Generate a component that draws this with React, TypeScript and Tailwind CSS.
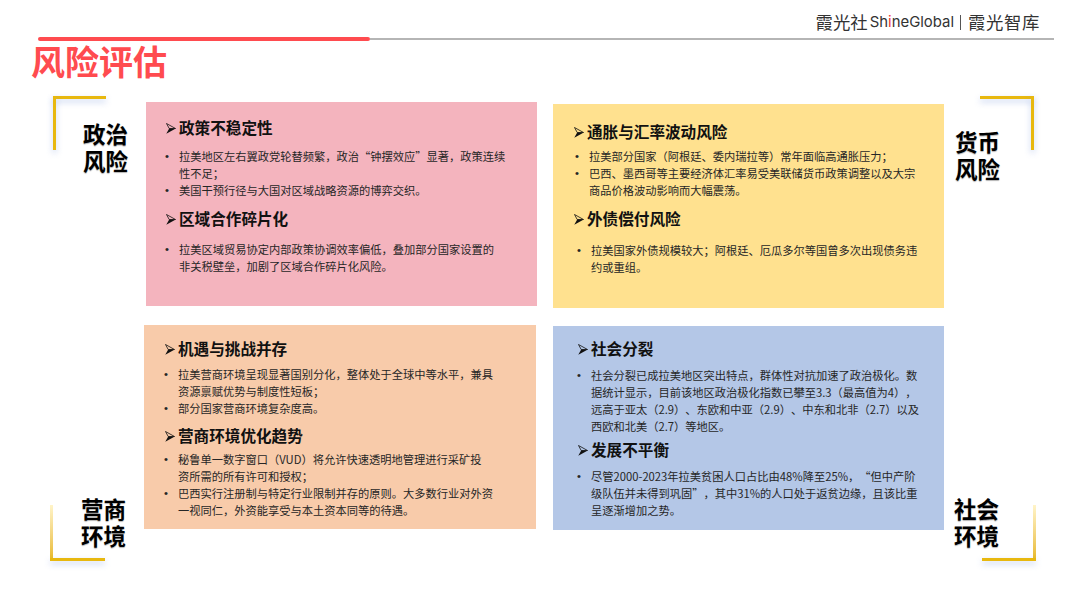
import { FC, ReactNode } from "react";

const font = "font-['Noto_Sans_CJK_SC','Noto_Sans',sans-serif]";

// body copy is typed with plain punctuation, shown full width like the slide
const fullWidth = (s: string) =>
  s
    .replace(/,/g, "\uFF0C")
    .replace(/;/g, "\uFF1B")
    .replace(/\(/g, "\uFF08")
    .replace(/\)/g, "\uFF09");

const Arrow = () => (
  <svg viewBox="0 0 10 11" className="w-[10px] h-[11px] ml-[1px] mr-[3px] shrink-0">
    <path d="M0.5 0.5 L9.5 5.5 L3.2 5.5 Z" fill="none" stroke="#111" strokeWidth="0.8" strokeLinejoin="round" />
    <path d="M3.2 5.5 L9.8 5.5 L0.3 10.8 Z" fill="#111" />
  </svg>
);

const Heading: FC<{ children: ReactNode; className?: string }> = ({ children, className }) => (
  <h3 className={`flex items-center h-[20px] text-[15.6px] font-bold text-[#111] whitespace-nowrap ${className ?? ""}`}>
    <Arrow />
    {children}
  </h3>
);

const Bullets: FC<{ items: string[][]; className?: string }> = ({ items, className }) => (
  <ul className={`text-[11.25px] leading-[17px] text-[#262626] whitespace-nowrap [text-spacing-trim:space-all] ${className ?? ""}`}>
    {items.map((lines) => (
      <li key={lines[0]} className="flex">
        <span className="w-[14px] font-['Liberation_Sans',sans-serif]">•</span>
        <div>
          {lines.map((l) => (
            <div key={l}>{fullWidth(l)}</div>
          ))}
        </div>
      </li>
    ))}
  </ul>
);

const shadow = "shadow-[0_3px_6px_rgba(120,150,220,0.45)]";

const Label: FC<{ lines: string[]; className?: string; children?: ReactNode }> = ({ lines, className, children }) => (
  <div className={`relative shrink-0 ${className ?? ""}`}>
    <div className="text-[22.5px] leading-[27px] font-bold text-black [text-shadow:0_1px_1px_rgba(0,0,0,0.3)]">
      {lines.map((l) => (
        <div key={l}>{l}</div>
      ))}
    </div>
    {children}
  </div>
);

export default function App() {
  return (
    <div lang="zh-CN" className={`w-[1080px] h-[608px] bg-white overflow-hidden ${font}`}>
      <header className="flex justify-end items-center h-[37px] pt-[7px] pr-[40px] text-[17.4px] leading-none text-[#333]">
        <span>霞光社</span>
        <span className="font-['Inter',sans-serif] text-[14.9px] ml-[2px]">
          Sh<span className="text-[#e33]">i</span>neGlobal
        </span>
        <span className="ml-[6px] mr-[7px] h-[15px] w-px bg-[#555]" />
        <span className="tracking-[0.6px]">霞光智库</span>
      </header>
      <div className="flex items-center ml-[38px] mr-[26px] h-[4px]">
        <div className="w-[332px] h-[4px] rounded-full bg-[#ff4b4f]" />
        <div className="flex-1 h-[2px] bg-[#b5b5b5]" />
      </div>
      <h1 className="ml-[31px] h-[40px] text-[34px] leading-[40px] font-bold text-[#ff4b4f]">风险评估</h1>

      <main className="mt-[21px]">
        <section className="flex items-start">
          <Label lines={["政治", "风险"]} className="w-[146px] pl-[83px] pt-[18px]">
            <div className={`absolute left-[53px] top-[-6px] w-[53px] h-[3px] bg-[#e8b80f] ${shadow}`} />
            <div className={`absolute left-[53px] top-[-6px] w-[3px] h-[54px] bg-[#e8b80f] ${shadow}`} />
          </Label>
          <div className="shrink-0 w-[391px] h-[204px] bg-[#f4b4be] pl-[19px] pt-[16px]">
            <Heading>政策不稳定性</Heading>
            <Bullets
              className="mt-[10px]"
              items={[
                ["拉美地区左右翼政党轮替频繁,政治“钟摆效应”显著,政策连续", "性不足;"],
                ["美国干预行径与大国对区域战略资源的博弈交织。"],
              ]}
            />
            <Heading className="mt-[10px]">区域合作碎片化</Heading>
            <Bullets
              className="mt-[12px]"
              items={[["拉美区域贸易协定内部政策协调效率偏低,叠加部分国家设置的", "非关税壁垒,加剧了区域合作碎片化风险。"]]}
            />
          </div>
          <div className="shrink-0 w-[391px] h-[204px] ml-[16px] mt-[2px] bg-[#ffe18f] pl-[20px] pt-[18px]">
            <Heading>通胀与汇率波动风险</Heading>
            <Bullets
              className="mt-[6px] ml-[2px]"
              items={[
                ["拉美部分国家(阿根廷、委内瑞拉等)常年面临高通胀压力;"],
                ["巴西、墨西哥等主要经济体汇率易受美联储货币政策调整以及大宗", "商品价格波动影响而大幅震荡。"],
              ]}
            />
            <Heading className="mt-[10px]">外债偿付风险</Heading>
            <Bullets
              className="mt-[13px] ml-[4px]"
              items={[["拉美国家外债规模较大;阿根廷、厄瓜多尔等国曾多次出现债务违", "约或重组。"]]}
            />
          </div>
          <Label lines={["货币", "风险"]} className="ml-[11px] w-[125px] pt-[26px]">
            <div className={`absolute left-[25px] top-[-6px] w-[54px] h-[3px] bg-[#e8b80f] ${shadow}`} />
            <div className={`absolute left-[76px] top-[-6px] w-[3px] h-[54px] bg-[#e8b80f] ${shadow}`} />
          </Label>
        </section>

        <section className="flex items-start mt-[17px]">
          <Label lines={["营商", "环境"]} className="w-[144px] pl-[81px] pt-[170px]">
            <div className="absolute left-[50px] top-[180px] w-[3px] h-[56px] bg-gradient-to-b from-[#fff4c8] to-[#e8b80f]" />
            <div className={`absolute left-[50px] top-[233px] w-[55px] h-[3px] bg-[#e8b80f] ${shadow}`} />
          </Label>
          <div className="shrink-0 w-[392px] h-[204px] bg-[#f8cbaa] pl-[20px] pt-[14px]">
            <Heading>机遇与挑战并存</Heading>
            <Bullets
              className="mt-[7px]"
              items={[
                ["拉美营商环境呈现显著国别分化,整体处于全球中等水平,兼具", "资源禀赋优势与制度性短板;"],
                ["部分国家营商环境复杂度高。"],
              ]}
            />
            <Heading className="mt-[9px]">营商环境优化趋势</Heading>
            <Bullets
              className="mt-[5px]"
              items={[
                ["秘鲁单一数字窗口(VUD)将允许快速透明地管理进行采矿投", "资所需的所有许可和授权;"],
                ["巴西实行注册制与特定行业限制并存的原则。大多数行业对外资", "一视同仁,外资能享受与本土资本同等的待遇。"],
              ]}
            />
          </div>
          <div className="shrink-0 w-[391px] h-[204px] ml-[17px] mt-[1px] bg-[#b4c7e7] pl-[24px] pt-[13px]">
            <Heading>社会分裂</Heading>
            <Bullets
              className="mt-[8px]"
              items={[
                [
                  "社会分裂已成拉美地区突出特点,群体性对抗加速了政治极化。数",
                  "据统计显示,目前该地区政治极化指数已攀至3.3(最高值为4),",
                  "远高于亚太(2.9)、东欧和中亚(2.9)、中东和北非(2.7)以及",
                  "西欧和北美(2.7)等地区。",
                ],
              ]}
            />
            <Heading className="mt-[5px]">发展不平衡</Heading>
            <Bullets
              className="mt-[8px]"
              items={[
                [
                  "尽管2000-2023年拉美贫困人口占比由48%降至25%,“但中产阶",
                  "级队伍并未得到巩固”,其中31%的人口处于返贫边缘,且该比重",
                  "呈逐渐增加之势。",
                ],
              ]}
            />
          </div>
          <Label lines={["社会", "环境"]} className="ml-[10px] w-[126px] pt-[170px]">
            <div className="absolute left-[79px] top-[180px] w-[3px] h-[56px] bg-gradient-to-b from-[#fff4c8] to-[#e8b80f]" />
            <div className={`absolute left-[28px] top-[233px] w-[54px] h-[3px] bg-[#e8b80f] ${shadow}`} />
          </Label>
        </section>
      </main>
    </div>
  );
}
